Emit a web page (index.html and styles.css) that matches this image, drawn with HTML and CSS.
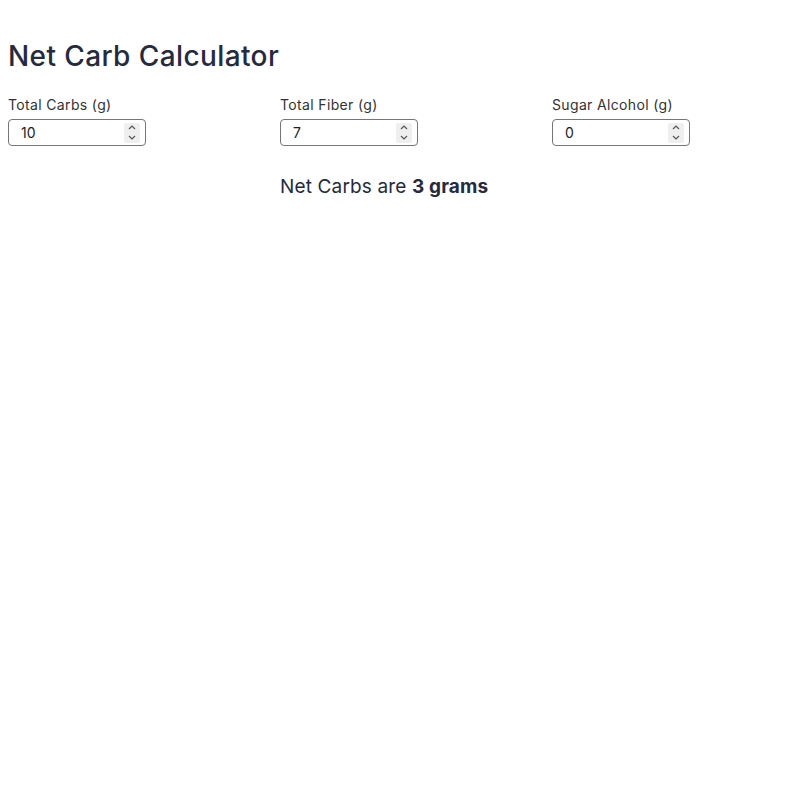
FILE: index.html
```html
<!DOCTYPE html>
<html lang="en">

<head>
    <meta charset="UTF-8" />
    <meta name="viewport" content="width=device-width, initial-scale=1.0" />
    <title>Net Carb Calculator</title>
    <link rel="stylesheet" href="styles.css">

    <script>
        function calculate() {
            const carbs = parseFloat(document.getElementById("carbs").value) || 0;
            const fiber = parseFloat(document.getElementById("fiber").value) || 0;
            const sugar = parseFloat(document.getElementById("sugar").value) || 0;

            document.getElementById("net").textContent = (carbs - fiber - sugar) + " grams";
        }

        function step(id, by) {
            const input = document.getElementById(id);
            input.value = (parseFloat(input.value) || 0) + by;
            calculate();
        }
    </script>
</head>

<body onload="calculate()">
    <h1 class="title">Net Carb Calculator</h1>

    <div class="fields">
        <div class="field">
            <label for="carbs">Total Carbs (g)</label>
            <div class="number-box">
                <input id="carbs" type="number" value="10" oninput="calculate()" />
                <div class="stepper">
                    <button onclick="step('carbs', 1)"><svg viewBox="0 0 8 5"><path d="M1 4 L4 1 L7 4" /></svg></button>
                    <button onclick="step('carbs', -1)"><svg viewBox="0 0 8 5"><path d="M1 1 L4 4 L7 1" /></svg></button>
                </div>
            </div>
        </div>
        <div class="field">
            <label for="fiber">Total Fiber (g)</label>
            <div class="number-box">
                <input id="fiber" type="number" value="7" oninput="calculate()" />
                <div class="stepper">
                    <button onclick="step('fiber', 1)"><svg viewBox="0 0 8 5"><path d="M1 4 L4 1 L7 4" /></svg></button>
                    <button onclick="step('fiber', -1)"><svg viewBox="0 0 8 5"><path d="M1 1 L4 4 L7 1" /></svg></button>
                </div>
            </div>
        </div>
        <div class="field">
            <label for="sugar">Sugar Alcohol (g)</label>
            <div class="number-box">
                <input id="sugar" type="number" value="0" oninput="calculate()" />
                <div class="stepper">
                    <button onclick="step('sugar', 1)"><svg viewBox="0 0 8 5"><path d="M1 4 L4 1 L7 4" /></svg></button>
                    <button onclick="step('sugar', -1)"><svg viewBox="0 0 8 5"><path d="M1 1 L4 4 L7 1" /></svg></button>
                </div>
            </div>
        </div>

        <p class="result">Net Carbs are <strong id="net">3 grams</strong></p>
    </div>
</body>

</html>
```

FILE: styles.css
```css
body {
    margin: 8px;
    font-family: Inter, "Noto Sans", sans-serif;
    color: #252a3e;
    background-color: #ffffff;
}

.title {
    font-size: 28px;
    font-weight: 500;
    margin: 30px 0 22px;
    line-height: 36px;
    letter-spacing: 0.4px;
}

/* Three inputs side by side, result sits under the middle one */
.fields {
    display: grid;
    grid-template-columns: repeat(3, 1fr);
    column-gap: 32px;
}

.field label {
    display: block;
    font-size: 14px;
    color: #333;
    line-height: 18px;
    letter-spacing: 0.35px;
    margin-bottom: 5px;
}

.number-box {
    box-sizing: border-box;
    display: flex;
    align-items: center;
    width: 138px;
    height: 27px;
    border: 1px solid #767676;
    border-radius: 4px;
}

.number-box input {
    flex: 1;
    min-width: 0;
    height: 100%;
    padding: 0 0 0 12px;
    font-family: Inter, sans-serif;
    font-size: 14px;
    color: #222;
    border: none;
    outline: none;
    background: transparent;
    -moz-appearance: textfield;
}

.number-box input::-webkit-inner-spin-button,
.number-box input::-webkit-outer-spin-button {
    -webkit-appearance: none;
    margin: 0;
}

/* small up/down chevrons */
.stepper {
    display: flex;
    flex-direction: column;
    width: 16px;
    height: 20px;
    margin-right: 5px;
    background-color: #efefef;
    border-radius: 2px;
}

.stepper button {
    flex: 1;
    display: flex;
    align-items: center;
    justify-content: center;
    padding: 0;
    border: none;
    background: transparent;
    cursor: pointer;
}

.stepper svg {
    width: 8px;
    height: 5px;
    fill: none;
    stroke: #555;
    stroke-width: 1.2;
}

.result {
    grid-column: 2 / span 2;
    font-size: 19px;
    margin: 29px 0 0;
    line-height: 24px;
    letter-spacing: 0.15px;
}

.result strong {
    font-weight: 700;
}
```
